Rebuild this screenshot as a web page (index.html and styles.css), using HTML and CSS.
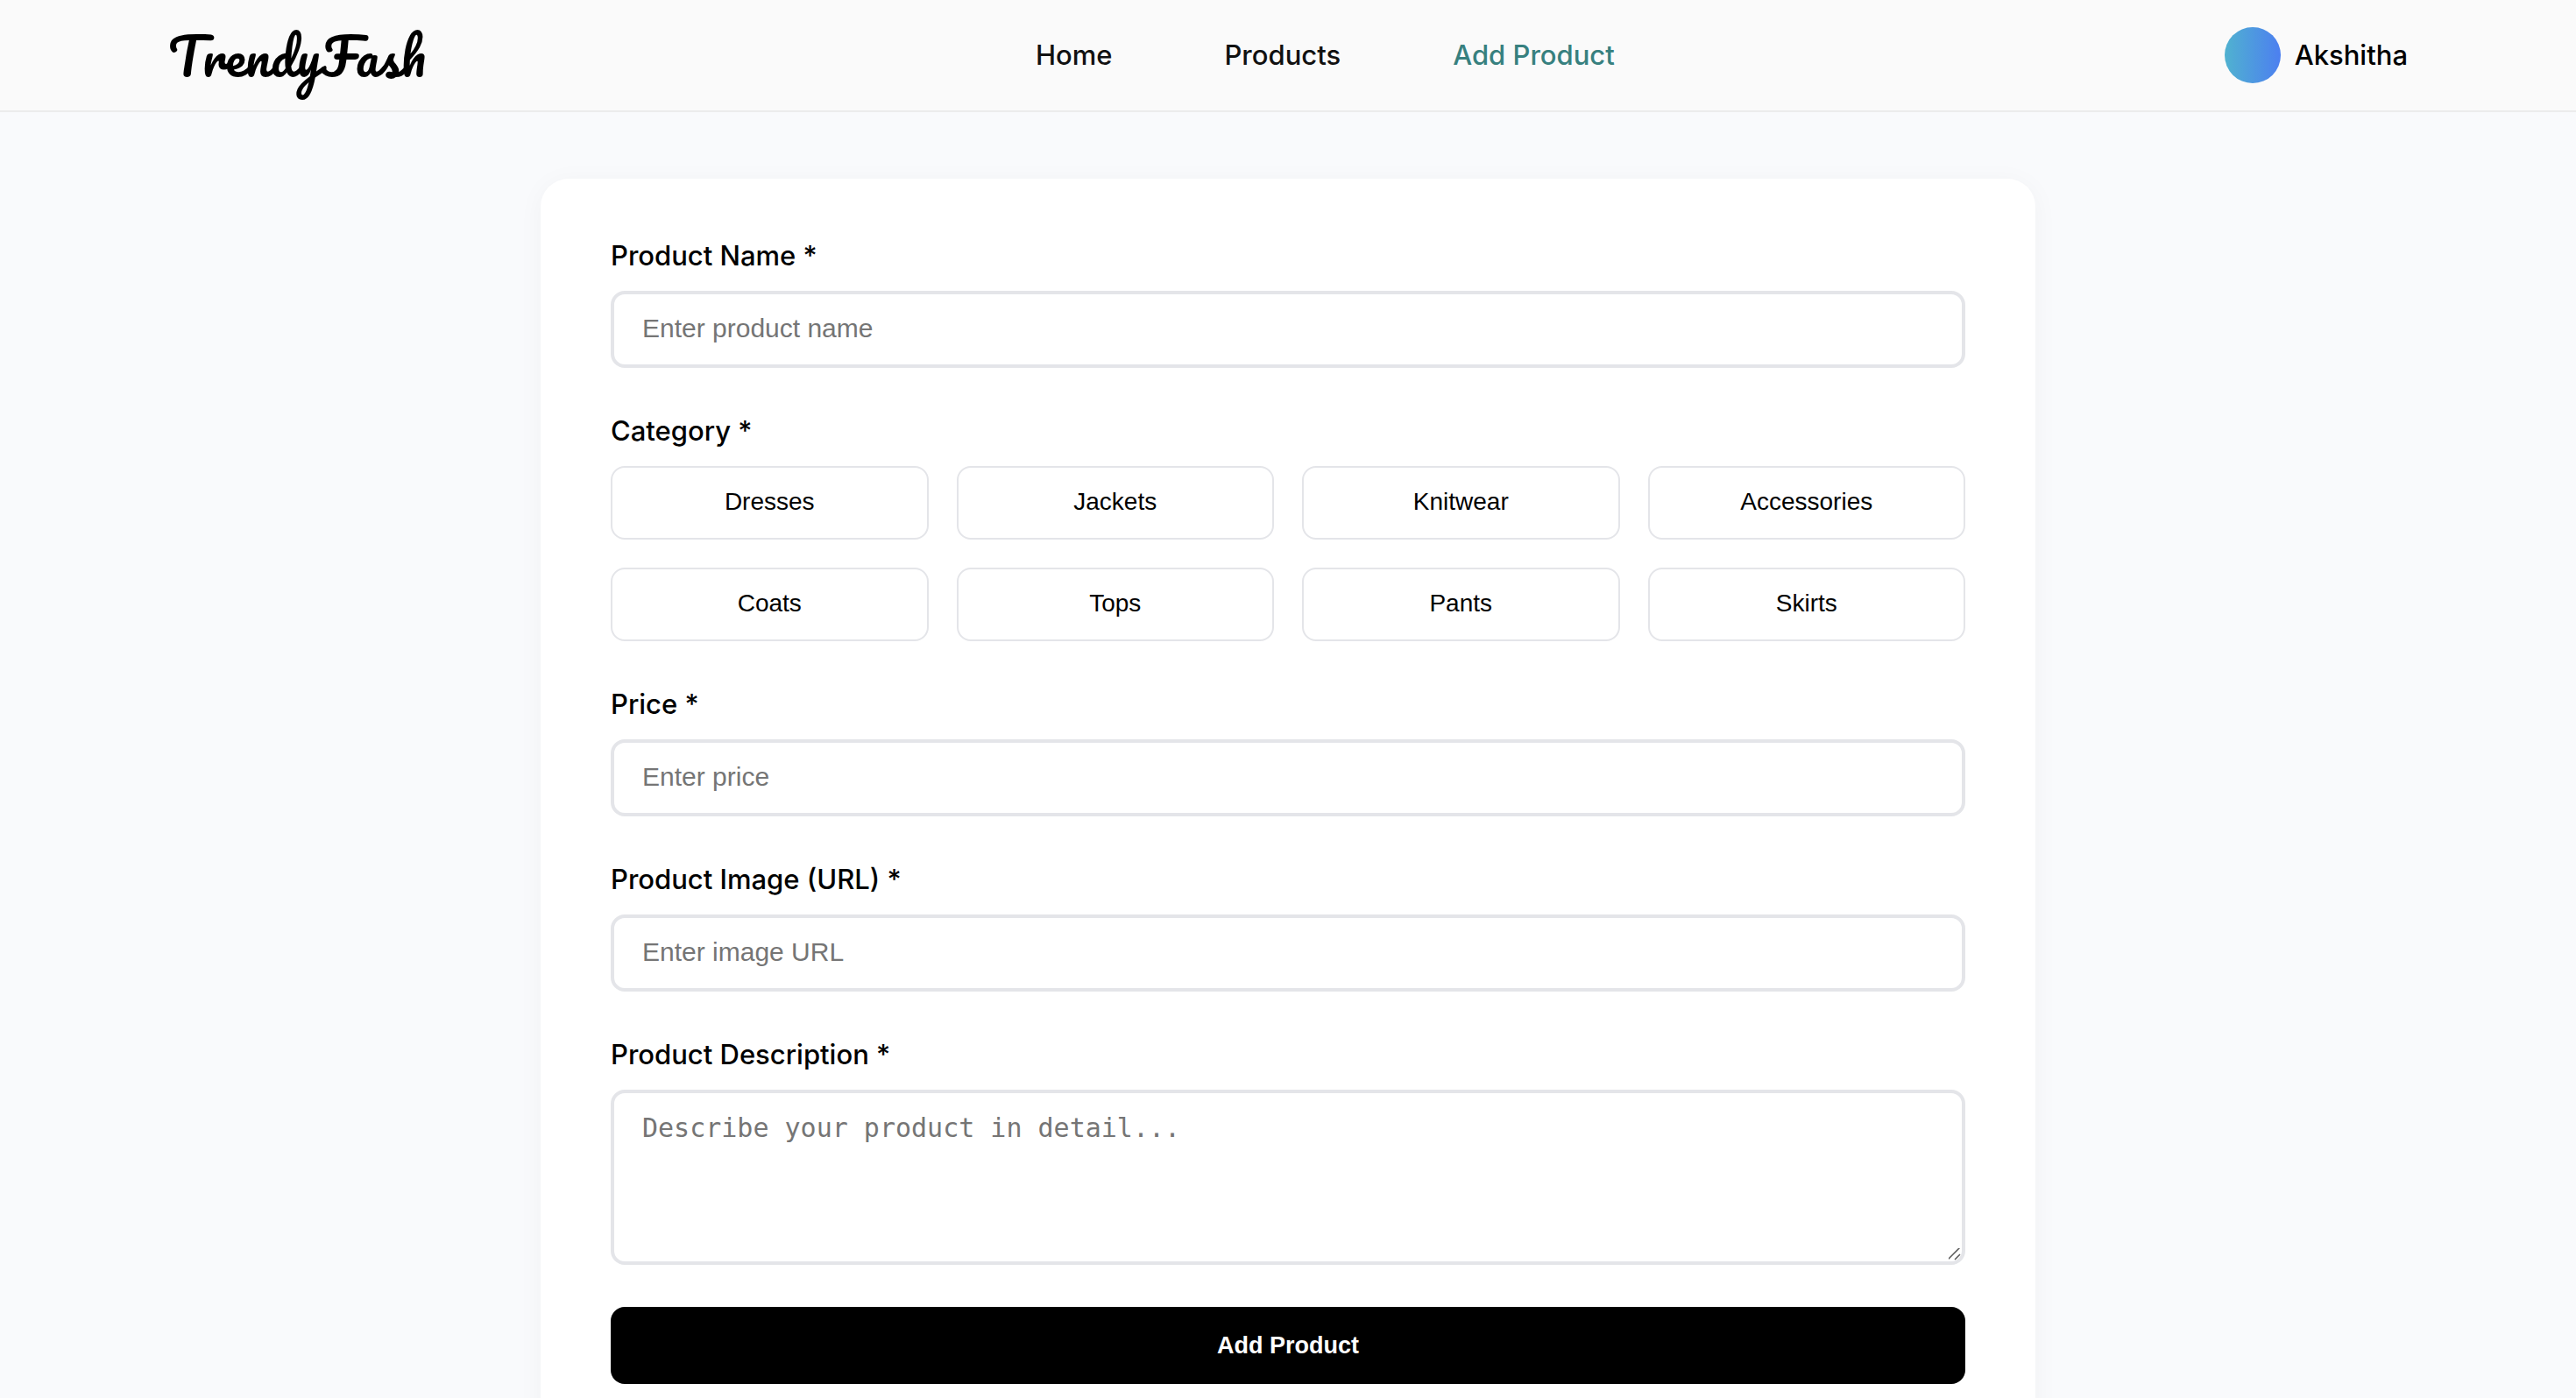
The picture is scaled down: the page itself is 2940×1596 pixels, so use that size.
FILE: index.html
```html
<!DOCTYPE html>
<html lang="en">
<head>
  <meta charset="utf-8">
  <title>TrendyFash – Add Product</title>
  <link rel="stylesheet" href="styles.css">
</head>
<body>
  <header class="navbar">
    <a class="logo" href="#">TrendyFash</a>
    <nav class="nav-links">
      <a class="nav-link" href="#">Home</a>
      <a class="nav-link" href="#">Products</a>
      <a class="nav-link active" href="#" aria-current="page">Add Product</a>
    </nav>
    <div class="user">
      <span class="avatar"></span>
      <span>Akshitha</span>
    </div>
  </header>
  <main class="page">
    <form class="card">
      <div class="field">
        <label for="name">Product Name *</label>
        <input class="control" id="name" type="text" placeholder="Enter product name">
      </div>
      <div class="field" role="group" aria-labelledby="category">
        <span class="label" id="category">Category *</span>
        <div class="categories">
          <button class="category" type="button">Dresses</button>
          <button class="category" type="button">Jackets</button>
          <button class="category" type="button">Knitwear</button>
          <button class="category" type="button">Accessories</button>
          <button class="category" type="button">Coats</button>
          <button class="category" type="button">Tops</button>
          <button class="category" type="button">Pants</button>
          <button class="category" type="button">Skirts</button>
        </div>
      </div>
      <div class="field">
        <label for="price">Price *</label>
        <input class="control" id="price" type="text" inputmode="decimal" placeholder="Enter price">
      </div>
      <div class="field">
        <label for="image">Product Image (URL) *</label>
        <input class="control" id="image" type="url" placeholder="Enter image URL">
      </div>
      <div class="field">
        <label for="description">Product Description *</label>
        <textarea class="control description" id="description" placeholder="Describe your product in detail..."></textarea>
      </div>
      <button class="submit" type="submit">Add Product</button>
    </form>
  </main>
</body>
</html>
```
FILE: styles.css
```css
* {
  box-sizing: border-box;
}

body {
  margin: 0;
  background: #f9fafc;
  color: #000;
  font: 500 31px/48px Inter, "Liberation Sans", sans-serif;
}

.navbar {
  display: flex;
  justify-content: space-between;
  align-items: center;
  height: 128px;
  padding: 0 192px;
  background: #fafafa;
  border-bottom: 2px solid #ececec;
}

.logo {
  color: #000;
  font: 400 58px/80px Pacifico, cursive;
  text-decoration: none;
}

.nav-links {
  display: flex;
  gap: 128px;
}

.nav-link {
  color: #111;
  text-decoration: none;
}

.nav-link.active {
  color: #37807f;
}

.user {
  display: flex;
  align-items: center;
  gap: 16px;
}

.avatar {
  width: 64px;
  height: 64px;
  border-radius: 50%;
  background: linear-gradient(90deg, #50b2d0, #4c7ff0);
}

.page {
  padding: 76px 32px;
}

.card {
  display: flex;
  flex-direction: column;
  gap: 48px;
  max-width: 1706px;
  margin: 0 auto;
  padding: 64px 80px;
  background: #fff;
  border-radius: 32px;
  box-shadow: 0 4px 30px rgba(0, 0, 0, 0.04);
}

.field {
  display: flex;
  flex-direction: column;
  gap: 16px;
}

.control {
  width: 100%;
  height: 88px;
  padding: 0 32px 2px;
  border: 4px solid #e4e5e9;
  border-radius: 16px;
  background: #fff;
  color: #000;
  font: 400 30px/36px "Liberation Sans", Arial, sans-serif;
}

.control::placeholder {
  color: #757575;
  opacity: 1;
}

.description {
  display: block;
  height: 200px;
  padding: 22px 32px;
  font-family: "DejaVu Sans Mono", monospace;
  resize: vertical;
}

.description::-webkit-scrollbar {
  width: 20px;
  height: 20px;
}

.description::-webkit-resizer {
  background: url("data:image/svg+xml,%3Csvg xmlns='http://www.w3.org/2000/svg' width='20' height='20'%3E%3Cpath d='M4 18 18 4M12 18 18 12' stroke='%23555' stroke-width='1.5'/%3E%3C/svg%3E") no-repeat right bottom;
}

.categories {
  display: grid;
  grid-template-columns: repeat(4, 1fr);
  gap: 32px;
}

.category {
  height: 84px;
  padding: 0 16px 2px;
  border: 2px solid #e4e5e9;
  border-radius: 16px;
  background: #fff;
  color: #000;
  font: 400 28px/32px "Liberation Sans", Arial, sans-serif;
}

.submit {
  height: 88px;
  border: 0;
  border-radius: 16px;
  background: #000;
  color: #fff;
  font: 700 27px/32px "Liberation Sans", Arial, sans-serif;
}
```
